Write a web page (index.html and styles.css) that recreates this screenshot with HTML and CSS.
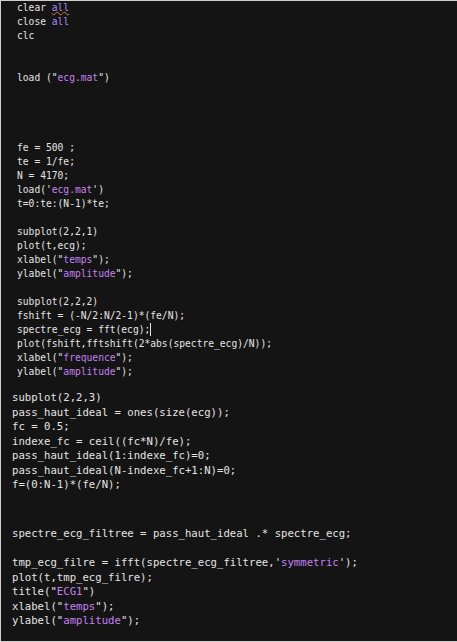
FILE: index.html
```html
<!DOCTYPE html>
<html>
<head>
<meta charset="utf-8">
<link rel="stylesheet" href="styles.css">
</head>
<body>
<div class="editor">
<pre class="code code-a">clear <span class="kw squiggle">all</span>
close <span class="kw">all</span>
clc


load ("<span class="str">ecg.mat</span>")




fe = 500 ;
te = 1/fe;
N = 4170;
load('<span class="str">ecg.mat</span>')
t=0:te:(N-1)*te;

subplot(2,2,1)
plot(t,ecg);
xlabel("<span class="str">temps</span>");
ylabel("<span class="str">amplitude</span>");

subplot(2,2,2)
fshift = (-N/2:N/2-1)*(fe/N);
spectre_ecg = fft(ecg);<span class="caret"></span>
plot(fshift,fftshift(2*abs(spectre_ecg)/N));
xlabel("<span class="str">frequence</span>");
ylabel("<span class="str">amplitude</span>");</pre>
<pre class="code code-b">subplot(2,2,3)
pass_haut_ideal = ones(size(ecg));
fc = 0.5;
indexe_fc = ceil((fc*N)/fe);
pass_haut_ideal(1:indexe_fc)=0;
pass_haut_ideal(N-indexe_fc+1:N)=0;
f=(0:N-1)*(fe/N);</pre>
<pre class="code code-b code-c">spectre_ecg_filtree = pass_haut_ideal .* spectre_ecg;

tmp_ecg_filre = ifft(spectre_ecg_filtree,'<span class="str">symmetric</span>');
plot(t,tmp_ecg_filre);
title("<span class="str">ECG1</span>")
xlabel("<span class="str">temps</span>");
ylabel("<span class="str">amplitude</span>");</pre>
</div>
</body>
</html>
```
FILE: styles.css
```css
html, body {
  margin: 0;
  padding: 0;
  background: #141414;
}
.editor {
  width: 456px;
  height: 640px;
  background: #141414;
  border-top: 1px solid #cfcfcf;
  border-left: 1px solid #cfcfcf;
  border-bottom: 1px solid #cfcfcf;
  overflow: hidden;
}
.code {
  margin: 0;
  font-family: "DejaVu Sans Mono", monospace;
  color: #e4e4e4;
  white-space: pre;
}
.code-a {
  font-size: 9.65px;
  line-height: 14px;
  padding-left: 16px;
}
.code-b {
  font-size: 10.65px;
  line-height: 14.5px;
  padding-left: 11px;
  margin-top: 12px;
}
.code-c {
  margin-top: 34.5px;
}
.kw {
  color: #ab8cf6;
}
.str {
  color: #c680f2;
}
.squiggle {
  text-decoration-line: underline;
  text-decoration-style: wavy;
  text-decoration-color: #c9862e;
  text-decoration-thickness: 1px;
  text-underline-offset: 0;
}
.caret {
  display: inline-block;
  width: 0;
  height: 13px;
  border-left: 1px solid #e6e6e6;
  vertical-align: -3px;
}
```
